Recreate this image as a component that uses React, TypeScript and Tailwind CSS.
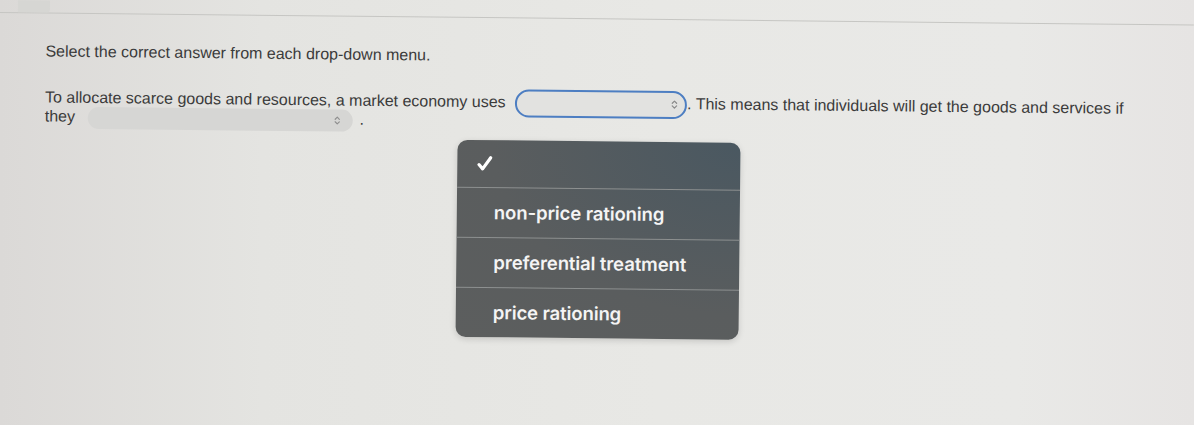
import React from "react";

function UpDown({ className = "" }: { className?: string }) {
    return (
        <svg viewBox="0 0 8 12" className={className} fill="none" stroke="currentColor" strokeWidth="1.4" strokeLinecap="round" strokeLinejoin="round">
            <polyline points="1.5,4.5 4,2 6.5,4.5" />
            <polyline points="1.5,7.5 4,10 6.5,7.5" />
        </svg>
    );
}

function Check() {
    return (
        <svg viewBox="0 0 16 16" className="w-[17px] h-[17px] text-white" fill="none" stroke="currentColor" strokeWidth="3" strokeLinecap="round" strokeLinejoin="round">
            <polyline points="2.5,9 6,13 13.5,2.5" />
        </svg>
    );
}

const options = ["non-price rationing", "preferential treatment", "price rationing"];

export default function App() {
    return (
        <div className="h-[425px] w-full overflow-hidden bg-[linear-gradient(90deg,#dbd9d7,#e4e4e1_22%,#e8e8e5_55%,#e9e9e7_85%,#e6e4e3)] font-['Liberation_Sans',Arial,sans-serif] text-[#3b3b3b]">
            <div className="origin-top-left rotate-[0.6deg]">
                {/* toolbar strip */}
                <div className="h-[13px] border-b border-[#c6c6c3] flex">
                    <div className="ml-[18px] w-[32px] h-full bg-[#d6d6d3] rounded-br-[3px]" />
                </div>

                <div className="pl-[46px] pt-[28px]">
                    <p className="text-[16px] leading-[19px]">Select the correct answer from each drop-down menu.</p>

                    <p className="mt-[27px] w-[1100px] text-[16px] leading-[19px]">
                        To allocate scarce goods and resources, a market economy uses{" "}
                        <span className="relative inline-block align-middle -my-[6px] ml-[5px]">
                            <button className="flex items-center justify-end w-[172px] h-[28px] rounded-full border-2 border-[#4d7ec2] bg-[#e2e2e0] pr-[7px]">
                                <UpDown className="w-[7px] h-[11px] text-[#8a8a8a]" />
                            </button>

                            {/* open option list */}
                            <div className="absolute left-[-57px] top-[51px] w-[283px] rounded-[10px] overflow-hidden bg-[radial-gradient(ellipse_at_top_right,#4a5861,#5a5d5e_62%,#5c5e5e)] shadow-[0_2px_6px_rgba(0,0,0,0.15)] font-['Inter',sans-serif]">
                                <div className="h-[47px] flex items-center pl-[19px]">
                                    <Check />
                                </div>
                                {options.map((o) => (
                                    <div key={o} className="h-[50px] flex items-center pl-[37px] border-t border-[#8d9090] text-[18.5px] font-semibold tracking-[-0.1px] text-[#f4f4f4]">
                                        {o}
                                    </div>
                                ))}
                            </div>
                        </span>
                        . This means that individuals will get the goods and services if they{" "}
                        <span className="inline-block align-middle -my-[4px] ml-[8px]">
                            <span className="flex items-center justify-end w-[265px] h-[22px] rounded-full bg-[#d6d6d4] pr-[12px]">
                                <UpDown className="w-[7px] h-[10px] text-[#8f8f8f]" />
                            </span>
                        </span>
                        <span className="ml-[7px]">.</span>
                    </p>
                </div>
            </div>
        </div>
    );
}
